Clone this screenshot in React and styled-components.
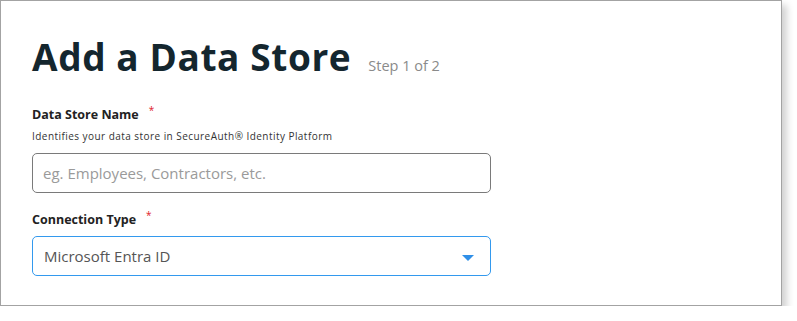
import React from "react";
import styled, { createGlobalStyle } from "styled-components";

const GlobalStyle = createGlobalStyle`
  body {
    margin: 0;
    background: #ffffff;
    font-family: "Open Sans", "Liberation Sans", sans-serif;
  }
`;

const Frame = styled.section`
  box-sizing: border-box;
  width: 782px;
  height: 306px;
  border: 1px solid #a3a3a3;
  background: #ffffff;
  box-shadow: 5px 5px 7px rgba(0, 0, 0, 0.18);
  padding: 33px 0 0 31px;
`;

const TitleRow = styled.div`
  display: flex;
  align-items: baseline;
  gap: 17px;
  margin-bottom: 27px;
`;

const Title = styled.h1`
  margin: 0;
  font-size: 37px;
  line-height: 46px;
  font-weight: 700;
  color: #14262e;
  letter-spacing: 0.6px;
`;

const Step = styled.span`
  font-size: 14.5px;
  color: #8a8a8a;
  font-weight: 400;
`;

const Field = styled.div`
  display: flex;
  flex-direction: column;
  margin-bottom: ${({ $gap }) => $gap || 0}px;
`;

const Label = styled.label`
  font-size: 12.5px;
  font-weight: 700;
  color: #222;
  line-height: 16px;
  margin-bottom: ${({ $gap }) => $gap}px;

  span {
    color: #e0202a;
    font-size: 10px;
    font-weight: 400;
    margin-left: 10px;
    position: relative;
    top: -5px;
  }
`;

const Hint = styled.div`
  font-size: 10px;
  color: #333;
  line-height: 14px;
  letter-spacing: 0.45px;
  margin-bottom: 10px;
`;

const Input = styled.input`
  box-sizing: border-box;
  width: 459px;
  height: 40px;
  border: 1px solid #7a7a7a;
  border-radius: 5px;
  padding: 0 10px;
  font-family: inherit;
  font-size: 15px;
  color: #333;
  outline: none;

  &::placeholder {
    color: #9a9a9a;
  }
`;

const Select = styled.div`
  box-sizing: border-box;
  width: 459px;
  height: 40px;
  border: 1px solid #3399ee;
  border-radius: 5px;
  padding: 0 16px 0 11px;
  display: flex;
  align-items: center;
  justify-content: space-between;
  font-size: 15px;
  color: #555;
`;

const Caret = styled.span`
  width: 0;
  height: 0;
  border-left: 6px solid transparent;
  border-right: 6px solid transparent;
  border-top: 6px solid #2f8fe8;
  margin-top: 3px;
`;

export default function App() {
  return (
    <>
      <GlobalStyle />
      <Frame>
        <TitleRow>
          <Title>Add a Data Store</Title>
          <Step>Step 1 of 2</Step>
        </TitleRow>
        <Field $gap={19}>
          <Label $gap={6}>
            Data Store Name<span>*</span>
          </Label>
          <Hint>Identifies your data store in SecureAuth® Identity Platform</Hint>
          <Input placeholder="eg. Employees, Contractors, etc." />
        </Field>
        <Field>
          <Label $gap={8}>
            Connection Type<span>*</span>
          </Label>
          <Select>
            Microsoft Entra ID
            <Caret />
          </Select>
        </Field>
      </Frame>
    </>
  );
}
